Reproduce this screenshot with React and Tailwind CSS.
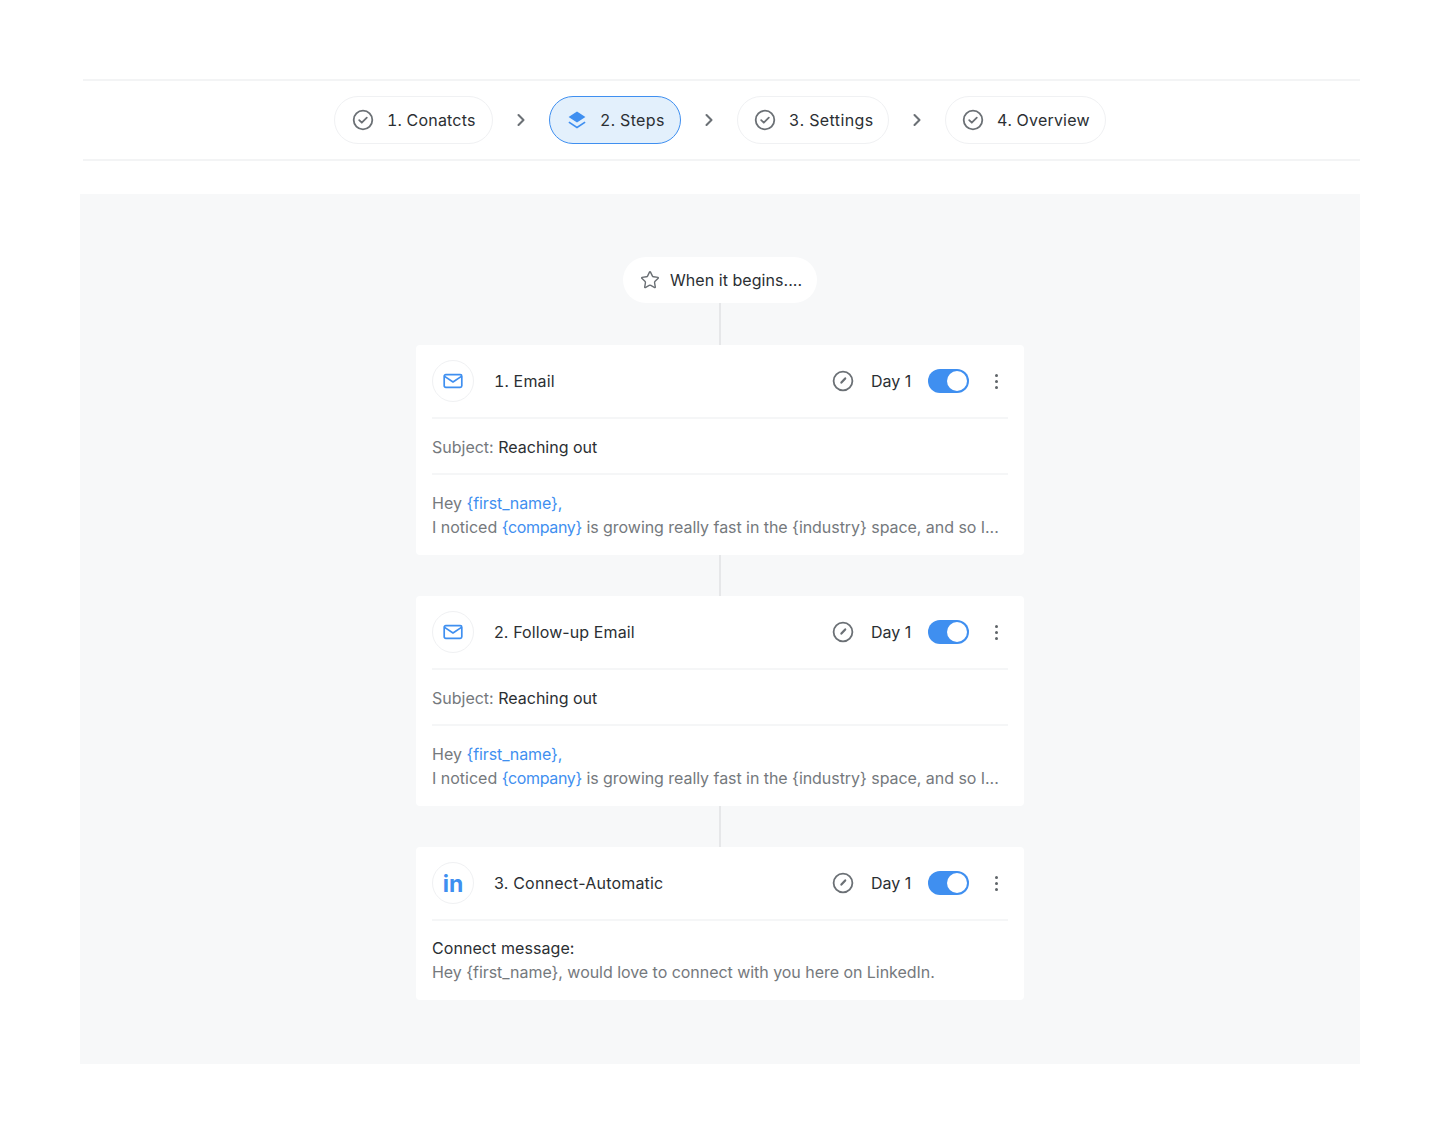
import React from "react";
import { ChevronRight, Star } from "lucide-react";

const font = "font-['Inter',sans-serif]";

function CheckCircle() {
  return (
    <svg width="22" height="22" viewBox="0 0 22 22" fill="none" className="shrink-0">
      <circle cx="11" cy="11" r="9.3" stroke="#6b7075" strokeWidth="1.8" />
      <path d="M7.2 11.2l2.6 2.5 5-5" stroke="#6b7075" strokeWidth="1.8" strokeLinecap="round" strokeLinejoin="round" />
    </svg>
  );
}

function LayersIcon() {
  return (
    <svg width="20" height="20" viewBox="0 0 20 20" fill="none" className="shrink-0">
      <path d="M10 1.5l8.4 5.6L10 12.4 1.6 7.1 10 1.5z" fill="#3f8ff0" />
      <path d="M2.4 11.6L10 16.4l7.6-4.8 1 1.1L10 18.4 1.4 12.7l1-1.1z" fill="#3f8ff0" />
    </svg>
  );
}

function MailIcon() {
  return (
    <svg width="20" height="16" viewBox="0 0 20 16" fill="none">
      <rect x="1.2" y="1.7" width="17.6" height="12.6" rx="1.6" stroke="#3f8ff0" strokeWidth="1.7" />
      <path d="M1.6 3.4L10 9l8.4-5.6" stroke="#3f8ff0" strokeWidth="1.7" strokeLinejoin="round" />
    </svg>
  );
}

function Gauge() {
  return (
    <svg width="22" height="22" viewBox="0 0 22 22" fill="none" className="shrink-0">
      <circle cx="11" cy="11" r="9.4" stroke="#6b7075" strokeWidth="1.8" />
      <path d="M9.4 12.6l3.8-4.2" stroke="#6b7075" strokeWidth="2.2" strokeLinecap="round" />
    </svg>
  );
}

function Step({ label, active, icon, width, tracking }) {
  return (
    <div
      className={`flex items-center h-12 rounded-full border ${width} ${
        active ? "bg-[#e3f0fc] border-[#3f8ff0]" : "bg-white border-[#f0f1f3]"
      }`}
    >
      {icon}
      <span className={`text-base text-[#2b2f33] tabular-nums whitespace-nowrap ${tracking}`}>{label}</span>
    </div>
  );
}

function Arrow() {
  return (
    <div className="w-14 flex justify-center">
      <ChevronRight size={20} color="#6b7075" strokeWidth={2.5} />
    </div>
  );
}

function CardHeader({ icon, title, titleClass }) {
  return (
    <div className="flex items-center h-[74px] border-b-2 border-[#f5f6f7]">
      <div className="w-[42px] h-[42px] rounded-full border border-[#f0f1f3] flex items-center justify-center shrink-0">
        {icon}
      </div>
      <span className={`ml-5 text-base text-[#2b2f33] ${titleClass}`}>{title}</span>
      <div className="ml-auto flex items-center">
        <Gauge />
        <span className="ml-[17px] w-[41px] text-base text-[#2b2f33] whitespace-nowrap">Day 1</span>
        <div className="ml-[16px] w-[41px] h-6 rounded-full bg-[#3f8ff0] flex items-center justify-end pr-[2px]">
          <div className="w-5 h-5 rounded-full bg-white" />
        </div>
        <div className="ml-[26px] mr-[10px] flex flex-col gap-[3px]">
          <div className="w-[3px] h-[3px] rounded-full bg-[#5f6468]" />
          <div className="w-[3px] h-[3px] rounded-full bg-[#5f6468]" />
          <div className="w-[3px] h-[3px] rounded-full bg-[#5f6468]" />
        </div>
      </div>
    </div>
  );
}

function EmailCard({ title, titleClass }) {
  return (
    <div className="w-[608px] h-[210px] bg-white rounded-[4px] pl-[16px] pr-[16px]">
      <CardHeader icon={<MailIcon />} title={title} titleClass={titleClass} />
      <div className="h-[56px] pt-[1px] flex items-center border-b-2 border-[#f5f6f7] text-base">
        <span className="text-[#75797d]">Subject:&nbsp;</span>
        <span className="text-[#2b2f33]">Reaching out</span>
      </div>
      <div className="pt-[16px] text-base leading-6 text-[#75797d] whitespace-nowrap">
        <div>
          Hey <span className="text-[#3f8ff0] tracking-[-0.1px]">{"{first_name},"}</span>
        </div>
        <div>
          I noticed <span className="text-[#3f8ff0] tracking-[-0.35px]">{"{company}"}</span>{" "}
          <span className="tracking-[-0.05px]">is growing really fast in the {"{industry}"} space, and so I...</span>
        </div>
      </div>
    </div>
  );
}

function Connector({ height }) {
  return <div className={`w-[2px] bg-[#e6e7e9] ${height}`} />;
}

export default function App() {
  return (
    <div className={`${font} bg-white min-h-[1144px] pt-[79px] px-[80px]`}>
      <div className="ml-[3px] pr-[3px] border-y-2 border-[#f3f4f5] h-[82px] flex items-center justify-center">
        <Step
          label="1. Conatcts"
          width="w-[159px]"
          tracking="tracking-[0.2px]"
          icon={<span className="ml-[17px] mr-[13px]"><CheckCircle /></span>}
        />
        <Arrow />
        <Step
          label="2. Steps"
          active
          width="w-[132px]"
          tracking="tracking-[0.35px]"
          icon={<span className="ml-[17px] mr-[13px]"><LayersIcon /></span>}
        />
        <Arrow />
        <Step
          label="3. Settings"
          width="w-[152px]"
          tracking="tracking-[0.4px]"
          icon={<span className="ml-[16px] mr-[13px]"><CheckCircle /></span>}
        />
        <Arrow />
        <Step
          label="4. Overview"
          width="w-[161px]"
          tracking="tracking-[0.2px]"
          icon={<span className="ml-[16px] mr-[13px]"><CheckCircle /></span>}
        />
      </div>

      <div className="mt-[33px] h-[870px] bg-[#f7f8f9] flex flex-col items-center pt-[63px]">
        <div className="w-[194px] h-[46px] rounded-full bg-white flex items-center pl-[17px]">
          <Star size={20} color="#6b7075" strokeWidth={1.7} />
          <span className="ml-[10px] text-base text-[#2b2f33] tracking-[0.05px] whitespace-nowrap">When it begins....</span>
        </div>
        <Connector height="h-[42px]" />
        <EmailCard title="1. Email" titleClass="tracking-[0.2px] tabular-nums" />
        <Connector height="h-[41px]" />
        <EmailCard title="2. Follow-up Email" titleClass="tracking-[0.1px]" />
        <Connector height="h-[41px]" />
        <div className="w-[608px] h-[153px] bg-white rounded-[4px] pl-[16px] pr-[16px]">
          <CardHeader
            icon={<span className="pt-[3px] text-[23px] font-bold text-[#3f8ff0] leading-none">in</span>}
            title="3. Connect-Automatic"
            titleClass="tracking-[0.2px]"
          />
          <div className="pt-[15px] text-base leading-6 whitespace-nowrap">
            <div className="text-[#2b2f33] tracking-[0.07px]">Connect message:</div>
            <div className="text-[#75797d] tracking-[-0.04px]">{"Hey {first_name}, would love to connect with you here on LinkedIn."}</div>
          </div>
        </div>
      </div>
    </div>
  );
}
